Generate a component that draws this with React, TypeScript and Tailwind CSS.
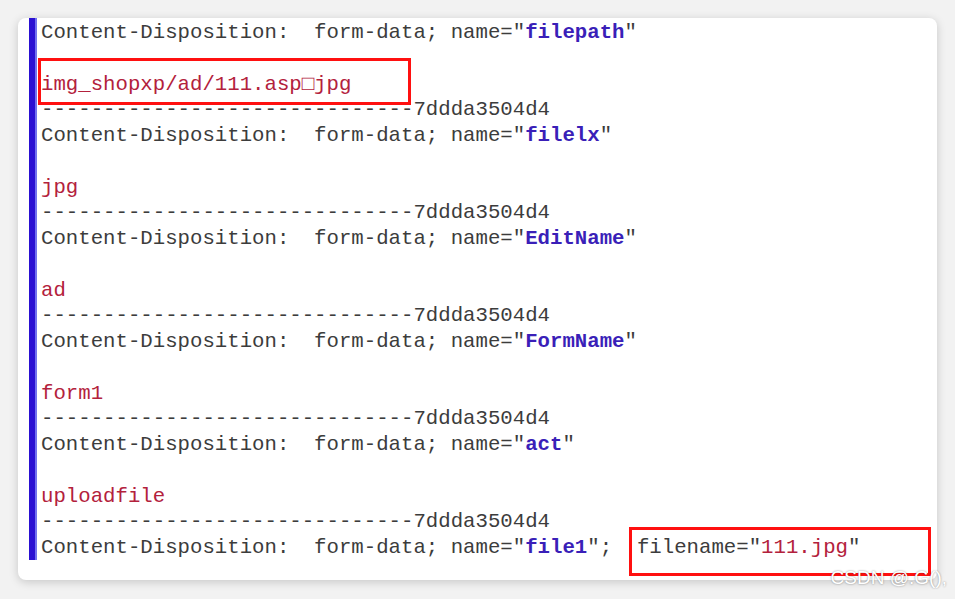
import React from "react";

type Seg = { t: string; c?: "n" | "b" | "r" };
const CD = "Content-Disposition:  form-data; name=";
const DASH = "------------------------------7ddda3504d4";

const lines: Seg[][] = [
  [{ t: CD }, { t: '"' }, { t: "filepath", c: "b" }, { t: '"' }],
  [],
  [{ t: "img_shopxp/ad/111.asp\u25A1jpg", c: "r" }],
  [{ t: DASH }],
  [{ t: CD }, { t: '"' }, { t: "filelx", c: "b" }, { t: '"' }],
  [],
  [{ t: "jpg", c: "r" }],
  [{ t: DASH }],
  [{ t: CD }, { t: '"' }, { t: "EditName", c: "b" }, { t: '"' }],
  [],
  [{ t: "ad", c: "r" }],
  [{ t: DASH }],
  [{ t: CD }, { t: '"' }, { t: "FormName", c: "b" }, { t: '"' }],
  [],
  [{ t: "form1", c: "r" }],
  [{ t: DASH }],
  [{ t: CD }, { t: '"' }, { t: "act", c: "b" }, { t: '"' }],
  [],
  [{ t: "uploadfile", c: "r" }],
  [{ t: DASH }],
  [
    { t: CD },
    { t: '"' },
    { t: "file1", c: "b" },
    { t: '";  filename="' },
    { t: "111.jpg", c: "r" },
    { t: '"' },
  ],
];

function cls(c?: string) {
  if (c === "b") return "text-[#3a1fb8] font-bold";
  if (c === "r") return "text-[#b3213c]";
  return "text-[#3c3c3c]";
}

export default function App() {
  return (
    <div className="min-h-[599px] w-[955px] bg-[#f2f2f2] pt-[18px] pl-[18px]">
      <div className="relative w-[919px] h-[562px] bg-white rounded-[8px] shadow-[0_2px_10px_rgba(0,0,0,0.18)] pl-[11px]">
        <div className="flex h-[542px]">
          <div className="w-[8px] h-full bg-[#2a10d2] border-r-2 border-[#7272ee]" />
          <div
            className="pl-[4px] pt-[2px] text-[20.7px] leading-[25.75px] whitespace-pre"
            style={{ fontFamily: '"Liberation Mono", "DejaVu Sans Mono", monospace' }}
          >
            {lines.map((l, i) => (
              <div key={i} className="h-[25.75px]">
                {l.map((s, j) => (
                  <span key={j} className={cls(s.c)}>
                    {s.t}
                  </span>
                ))}
              </div>
            ))}
          </div>
        </div>
        <div className="absolute left-[20px] top-[40px] w-[373px] h-[47px] border-[3px] border-[#ff1010]" />
        <div className="absolute left-[611px] top-[509px] w-[302px] h-[49px] border-[3px] border-[#ff1010]" />
        <div
          className="absolute right-[-10px] bottom-[-12px] text-[19px] text-white [text-shadow:0_0_2px_rgba(0,0,0,0.45)]"
          style={{ fontFamily: '"Liberation Sans", Arial, sans-serif' }}
        >
          CSDN @.G(),
        </div>
      </div>
    </div>
  );
}
